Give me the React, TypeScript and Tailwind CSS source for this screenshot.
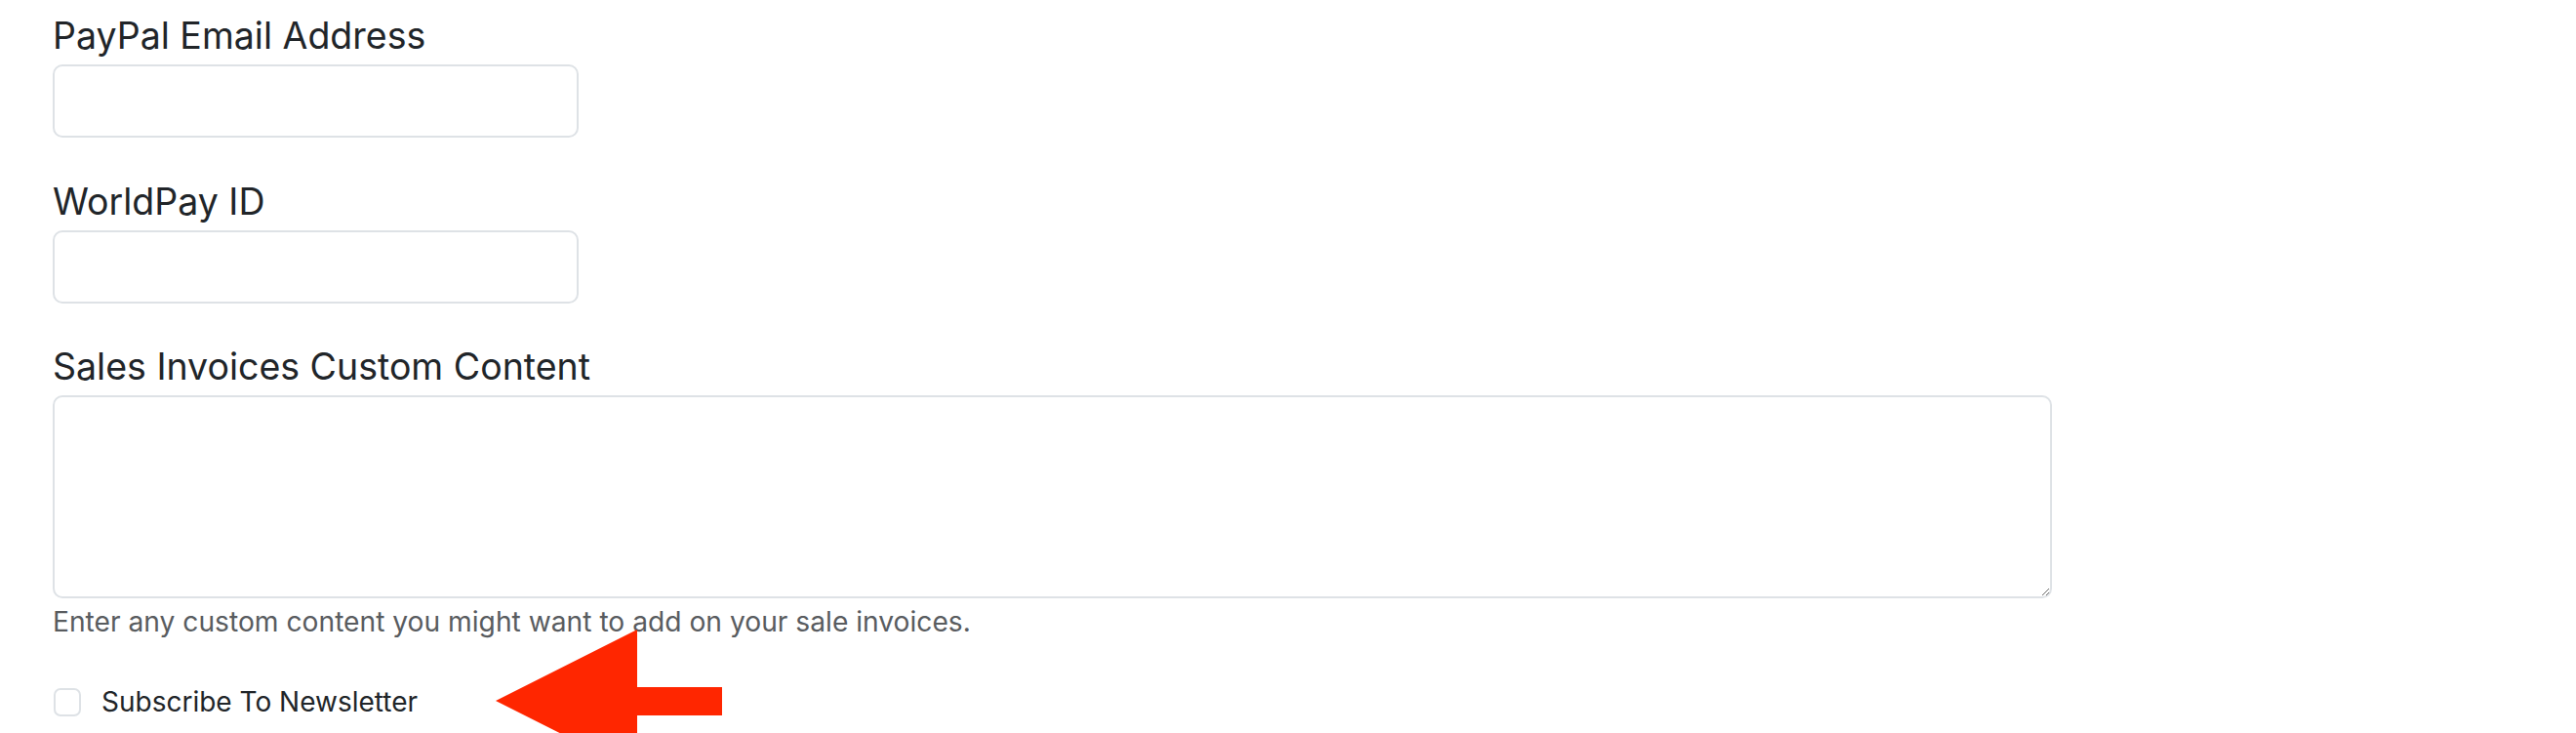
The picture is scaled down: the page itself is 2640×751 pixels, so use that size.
import React from 'react';

const fieldLabel = 'block text-[37.5px] leading-[44px] text-[#212529] mb-[7px]';

const App: React.FC = () => {
  return (
    <div
      className="relative h-[751px] overflow-hidden bg-white pl-[54px] pt-[15px]"
      style={{ fontFamily: 'Inter, "Noto Sans", sans-serif' }}
    >
      {/* PayPal */}
      <div className="mb-[44px]">
        <label className={fieldLabel}>PayPal Email Address</label>
        <input
          type="text"
          className="block h-[75px] w-[539px] rounded-[10px] border-2 border-[#dee2e6] bg-white outline-none"
        />
      </div>

      {/* WorldPay */}
      <div className="mb-[43px]">
        <label className={fieldLabel}>WorldPay ID</label>
        <input
          type="text"
          className="block h-[75px] w-[539px] rounded-[10px] border-2 border-[#dee2e6] bg-white outline-none"
        />
      </div>

      {/* Sales invoices content */}
      <div>
        <label className={fieldLabel}>Sales Invoices Custom Content</label>
        <textarea className="block h-[208px] w-[2049px] rounded-[10px] border-2 border-[#dee2e6] bg-white outline-none" />
        <p className="mt-[3px] text-[28.2px] leading-[42px] text-[#595c5f]">
          Enter any custom content you might want to add on your sale invoices.
        </p>
      </div>

      {/* Newsletter */}
      <div className="mt-[40px] flex items-center gap-[21px]">
        <span className="ml-px block h-[29px] w-[28px] rounded-[7px] border-2 border-[#dee2e6] bg-white" />
        <span className="text-[28px] leading-[42px] text-[#212529]">Subscribe To Newsletter</span>
      </div>

      {/* annotation arrow */}
      <svg
        className="absolute left-[508px] top-[645px]"
        width="232"
        height="146"
        viewBox="0 0 232 146"
      >
        <polygon points="0,73 145,0 145,59 232,59 232,88 145,88 145,146" fill="#ff2600" />
      </svg>
    </div>
  );
};

export default App;
